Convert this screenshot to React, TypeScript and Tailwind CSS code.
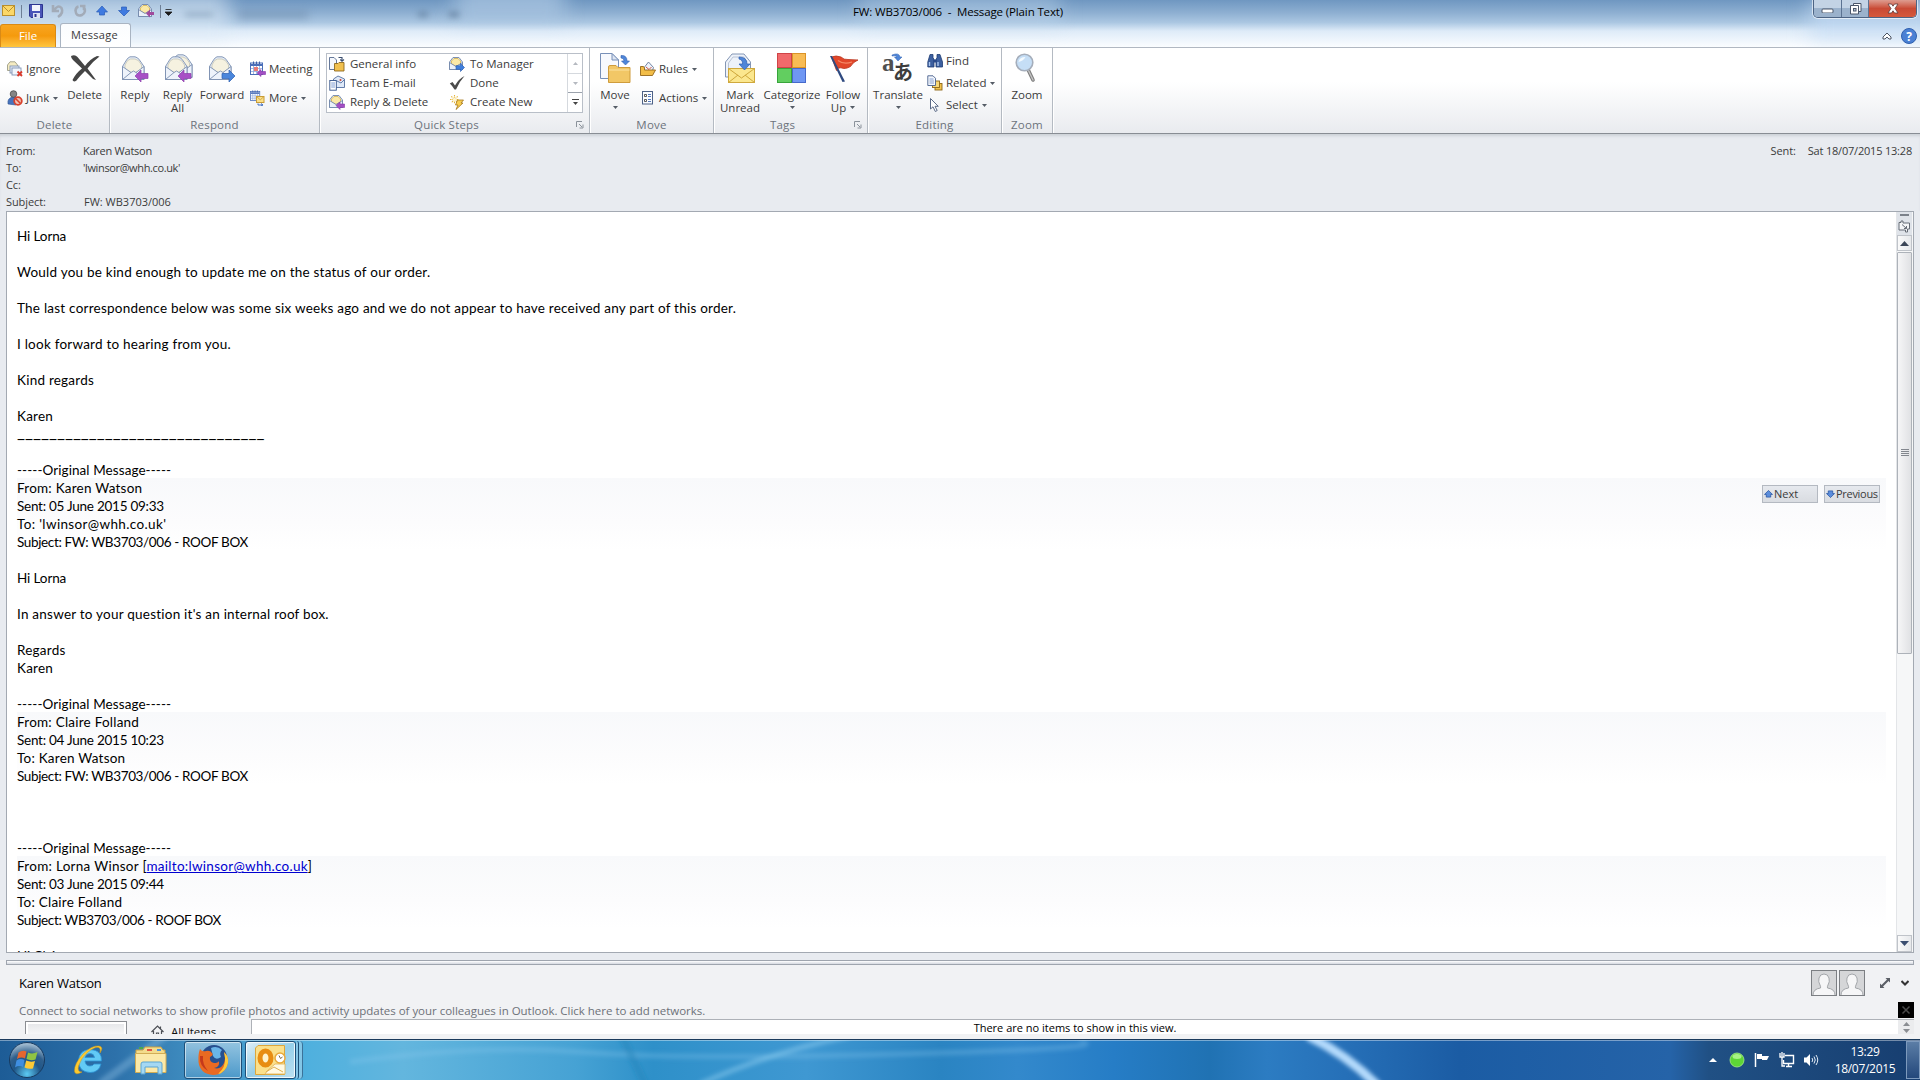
import type { ReactNode } from "react"
import clsx from "clsx"

/* ---------- shared icon parts ---------- */

const ARROW_LEFT = "M0 6 L6 0 V3.5 H13 V8.5 H6 V12 Z"
const ARROW_RIGHT = "M13 6 L7 0 V3.5 H0 V8.5 H7 V12 Z"

function OpenEnvelope() {
  return (
    <g stroke="#7a8fb0" strokeWidth=".9">
      <path d="M1.5 10.500 L5.500 4 Q7 1.500 9 .8 H14 Q17 1.500 18.500 4 L23 10.500 V23.500 H1.500 Z" fill="#e4ecf7" />
      <path d="M4 13 V9 Q6 3.500 9.500 3 H14 Q18 3.500 20.500 9 V13 L12.500 18 Z" fill="#f6f2e0" stroke="#c9c9bc" />
      <path d="M1.500 10.500 L10 16.500 L12.500 15 L15 16.500 L23 10.500 V23.500 H1.500 Z" fill="#eef3fb" />
      <path d="M1.500 23.500 L10 16.500 M23 23.500 L15 16.500" fill="none" />
    </g>
  )
}

function ReplyIcon() {
  return (
    <svg width="32" height="32" viewBox="0 0 32 32">
      <g transform="translate(2 3)"><OpenEnvelope /></g>
      <path d={ARROW_LEFT} transform="translate(16 17)" fill="#a850c6" stroke="#8c40ac" strokeWidth=".7" />
    </svg>
  )
}

function ReplyAllIcon() {
  return (
    <svg width="32" height="32" viewBox="0 0 32 32">
      <g transform="translate(7 1)"><OpenEnvelope /></g>
      <g transform="translate(2 3)"><OpenEnvelope /></g>
      <path d={ARROW_LEFT} transform="translate(16 17)" fill="#a850c6" stroke="#8c40ac" strokeWidth=".7" />
    </svg>
  )
}

function ForwardIcon() {
  return (
    <svg width="32" height="32" viewBox="0 0 32 32">
      <g transform="translate(2 3)"><OpenEnvelope /></g>
      <path d={ARROW_RIGHT} transform="translate(16 17)" fill="#4a86dc" stroke="#2c5fb0" strokeWidth=".7" />
    </svg>
  )
}

function DeleteIcon() {
  return (
    <svg width="32" height="32" viewBox="0 0 32 32">
      <path d="M2 3 Q6 1 8.500 4 L16 13 Q21 6 28 3 L30.500 3.500 Q23 9 18.500 15.500 L27 27 L24 26 L16 18 Q10 24 7.500 27.500 Q4.500 29.500 3.500 27 Q7 20 13 15.500 L4 7 Q2 5 2 3 Z" fill="#454545" />
    </svg>
  )
}

function MoveIcon() {
  return (
    <svg width="32" height="32" viewBox="0 0 32 32">
      <path d="M1.500 .5 H13 L19.500 7 V25.500 H1.500 Z" fill="#f7f9fd" stroke="#7890b8" />
      <path d="M13 .5 V7 H19.500 Z" fill="#dde5f2" stroke="#7890b8" />
      <path d="M9.500 14 Q9.500 12.500 11 12.500 H17 L19 14.500 H31 V29.500 H9.500 Z" fill="#f2c766" stroke="#cf9c3c" />
      <path d="M10 17 H30.500" stroke="#fbe3a1" />
      <path d="M22 2.500 Q28 2 28 8 H30.500 L26.500 12 L22.500 8 H25 Q25 5 22 5 Z" fill="#4f86d8" stroke="#2f60b0" strokeWidth=".6" />
    </svg>
  )
}

function MarkUnreadIcon() {
  return (
    <svg width="32" height="32" viewBox="0 0 32 32">
      <path d="M1.500 24 V9 L8 1 H20 L26.500 9 V24 Z" fill="#edf2fa" stroke="#8496b4" />
      <path d="M4.500 15 V10 L9 4 H20 L23 9" fill="none" stroke="#bac4d6" />
      <rect x="4.500" y="15.500" width="26" height="14" fill="#fbe78e" stroke="#cfa83c" />
      <path d="M4.500 15.500 L17.500 25 L30.500 15.500 M4.500 29.500 L14 22 M30.500 29.500 L21 22" fill="none" stroke="#cfa83c" />
      <path d="M15 4 Q23 4 23 11 H26 L20.500 17 L15 11 H18.500 Q19 7 15 6 Z" fill="#4f86d8" stroke="#2f60b0" strokeWidth=".7" />
    </svg>
  )
}

function CategorizeIcon() {
  return (
    <svg width="32" height="32" viewBox="0 0 32 32">
      <rect x="1.500" y=".5" width="14" height="14" fill="#f0696b" stroke="#cf4447" />
      <rect x="16.500" y=".5" width="13" height="14" fill="#f8bc55" stroke="#db9327" />
      <rect x="1.500" y="15.500" width="14" height="14" fill="#62ce60" stroke="#37a43b" />
      <rect x="16.500" y="15.500" width="13" height="14" fill="#6f97f3" stroke="#4669cb" />
    </svg>
  )
}

function FlagIcon() {
  return (
    <svg width="32" height="32" viewBox="0 0 32 32">
      <path d="M4.500 4 Q9 2 14 4 Q17 7 21 6.500 L31 7 Q26 9 23.500 13.500 Q18 16.500 15 15 Q11 14 9.500 17.500 Z" fill="#e2472a" stroke="#b8331d" strokeWidth=".8" />
      <path d="M3 3 L5 3 L18 28.500 L15.500 29 Z" fill="#2f4a80" />
      <path d="M11 7.500 Q17 12 25 9" fill="none" stroke="#f58a68" strokeWidth="1.200" />
    </svg>
  )
}

function TranslateIcon() {
  return (
    <svg width="32" height="32" viewBox="0 0 32 32">
      <text x="0" y="18" fontFamily="Liberation Serif, serif" fontWeight="700" fontSize="25" fill="#505050">a</text>
      <text x="11" y="27" fontFamily="Noto Sans CJK JP, sans-serif" fontWeight="700" fontSize="20" fill="#3d3d3d">あ</text>
      <path d="M10 2 Q17 -1 18 4 H20 L16 8 L12.500 4 H15 Q14 2 10 3 Z" fill="#4f86d8" stroke="#2f60b0" strokeWidth=".5" />
    </svg>
  )
}

function ZoomIcon() {
  return (
    <svg width="32" height="32" viewBox="0 0 32 32">
      <path d="M17.500 17.500 L22 27" stroke="#7e7e7e" strokeWidth="3.600" strokeLinecap="round" />
      <path d="M17.500 17.500 L22 27" stroke="#c4c4c4" strokeWidth="1.400" strokeLinecap="round" />
      <circle cx="13.500" cy="9.500" r="8.300" fill="#c5def6" stroke="#a5aebb" strokeWidth="1.600" />
      <path d="M7.500 9 Q8.500 4 14.500 4 Q12.500 8 7.500 9 Z" fill="#f3faff" />
    </svg>
  )
}

/* 16px variants */

function SmallEnvelope() {
  return (
    <g stroke="#7287aa" strokeWidth=".9">
      <path d="M.5 6 L4 1.500 H10 L13.500 6 V13.500 H.5 Z" fill="#e6edf8" />
      <path d="M2.500 8 V5 L5 2.500 H9 L11.500 5 V8 L7 10.500 Z" fill="#fbe9a7" stroke="#d9b957" />
      <path d="M.5 6.500 L7 10.500 L13.500 6.500 V13.500 H.5 Z" fill="#e9f0fa" />
    </g>
  )
}

function SmallReply() {
  return (
    <svg width="16" height="16" viewBox="0 0 16 16">
      <SmallEnvelope />
      <path d="M7 11.500 L11 8 V10 H15.500 V13.500 H11 V15.500 Z" fill="#a34fc4" stroke="#8436a8" strokeWidth=".6" />
    </svg>
  )
}

function SmallForward() {
  return (
    <svg width="16" height="16" viewBox="0 0 16 16">
      <SmallEnvelope />
      <path d="M15.500 11.500 L11.500 7.500 V9.700 H7 V13.300 H11.500 V15.500 Z" fill="#3f7fdc" stroke="#2458ac" strokeWidth=".6" />
    </svg>
  )
}

function IgnoreIcon() {
  return (
    <svg width="16" height="16" viewBox="0 0 16 16">
      <path d="M.5 9.500 V4 L3 .8 H8 L10.500 4 V9.500 Z" fill="#f6ecc2" stroke="#9d9d86" strokeWidth=".9" />
      <rect x="3" y="5" width="9" height="7" fill="#e3ebf7" stroke="#8295b5" strokeWidth=".9" />
      <rect x="5" y="7" width="9" height="7" fill="#f2f6fc" stroke="#8295b5" strokeWidth=".9" />
      <path d="M10.500 10.500 L15 15 M15 10.500 L10.500 15" stroke="#dc3b2c" strokeWidth="1.800" />
    </svg>
  )
}

function JunkIcon() {
  return (
    <svg width="16" height="16" viewBox="0 0 16 16">
      <path d="M1 14 Q0 8 6 7 Q10 7 11 10 L9 15 Z" fill="#4673bd" stroke="#2c4f8d" strokeWidth=".6" />
      <circle cx="6.500" cy="4" r="3.300" fill="#858585" stroke="#4c4c4c" strokeWidth=".8" />
      <circle cx="11" cy="11" r="3.800" fill="#f0c4b8" stroke="#d8412c" strokeWidth="1.800" />
      <path d="M8.500 8.500 L13.500 13.500" stroke="#d8412c" strokeWidth="1.600" />
    </svg>
  )
}

function CalendarGrid() {
  return (
    <g>
      <rect x=".5" y="2" width="12" height="11.500" fill="#fff" stroke="#4a6eb8" />
      <path d="M1 4 H12" stroke="#4a6eb8" strokeWidth="2" />
      <path d="M3.500 .5 V3 M6.500 .5 V3 M9.500 .5 V3" stroke="#3b5ea8" />
      <path d="M1 7.500 H12 M1 10.500 H12 M3.500 5 V13 M6.500 5 V13 M9.500 5 V13" stroke="#8ea8da" strokeWidth=".8" />
    </g>
  )
}

function MeetingIcon() {
  return (
    <svg width="16" height="16" viewBox="0 0 16 16">
      <CalendarGrid />
      <rect x="4" y="6" width="4" height="4" fill="#e87b78" />
      <path d="M7 12 L11 8.500 V10.500 H15.500 V13.500 H11 V15.500 Z" fill="#a34fc4" stroke="#8436a8" strokeWidth=".6" />
    </svg>
  )
}

function MoreIcon() {
  return (
    <svg width="16" height="16" viewBox="0 0 16 16">
      <g transform="scale(.78)"><CalendarGrid /></g>
      <rect x="6.500" y="6.500" width="7.500" height="6" fill="#fbe08a" stroke="#c99c36" />
      <path d="M6.500 6.500 L10.300 9.800 L14 6.500" fill="none" stroke="#c99c36" strokeWidth=".8" />
      <path d="M8 13.500 V15 H12 M11 13.500 L13 15 L11 16" stroke="#3d6cc0" fill="none" />
    </svg>
  )
}

function MoveSmallIcon() {
  return (
    <svg width="16" height="16" viewBox="0 0 16 16">
      <path d="M.5 1.500 H5 L7.500 4 V13.500 H.5 Z" fill="#f4f7fc" stroke="#53698f" strokeWidth=".9" />
      <path d="M5.500 7.500 H9 L10 6.500 H15 V15 H5.500 Z" fill="#f0c04f" stroke="#8f6a1e" strokeWidth=".9" />
      <path d="M9.500 1.500 H13 V5 M11.300 3.500 L13 5.300 L15 3.500" stroke="#384c6e" fill="none" strokeWidth="1.100" />
    </svg>
  )
}

function TeamMailIcon() {
  return (
    <svg width="16" height="16" viewBox="0 0 16 16">
      <path d="M4.500 4 L9 1 L15.500 4 V12.500 H5 Z" fill="#dfe9f8" stroke="#55719f" strokeWidth=".9" />
      <path d="M8 6 L12 8 L15 5" stroke="#55719f" fill="none" strokeWidth=".9" />
      <circle cx="11.500" cy="5" r="1" fill="#cc4435" />
      <rect x=".8" y="5.500" width="6.500" height="9.700" fill="#fff" stroke="#35548a" strokeWidth=".9" />
      <path d="M2.200 8 H6 M2.200 10 H6 M2.200 12 H6" stroke="#5e84c6" strokeWidth=".8" />
    </svg>
  )
}

function DoneIcon() {
  return (
    <svg width="16" height="16" viewBox="0 0 16 16">
      <path d="M.8 8.500 L3.500 7 L6 10.500 Q9.500 4 15.500 1 Q10 7 7 14.500 H5.500 Q3.500 11 .8 8.500 Z" fill="#4b4b4b" />
    </svg>
  )
}

function CreateNewIcon() {
  return (
    <svg width="16" height="16" viewBox="0 0 16 16">
      <path d="M5.500 1 V10 M1 5.500 H10 M2.300 2.300 L8.700 8.700 M8.700 2.300 L2.300 8.700" stroke="#e5b63a" strokeWidth="1.100" strokeDasharray="1.500 .7" />
      <circle cx="5.500" cy="5.500" r="1.700" fill="#fff6cf" />
      <path d="M8.500 6 H14.500 L12 9 H14 L7 15.500 L9 11 H6.500 Z" fill="#f9cf52" stroke="#a5771d" strokeWidth=".8" />
    </svg>
  )
}

function RulesIcon() {
  return (
    <svg width="16" height="16" viewBox="0 0 16 16">
      <path d="M3 8 L8.500 1 L13.500 6.500 L12 11 H4 Z" fill="#eef3fb" stroke="#627698" strokeWidth=".9" />
      <path d="M6 6 L9 8.500 L11.500 6" stroke="#cf5448" fill="none" />
      <path d="M.5 14.500 V5.500 H3.500 L4.500 7 V9 H15.500 L12.500 14.500 Z" fill="#f2bd47" stroke="#94671a" strokeWidth=".9" />
    </svg>
  )
}

function ActionsIcon() {
  return (
    <svg width="16" height="16" viewBox="0 0 16 16">
      <rect x="2.500" y="1.500" width="10" height="12.500" fill="#fafcff" stroke="#4d6186" />
      <path d="M4.500 4.500 H6.500 V6.500 H4.500 Z M4.500 9.500 H6.500 V11.500 H4.500 Z" fill="#fff" stroke="#333" strokeWidth=".8" />
      <path d="M8 4.500 H11 M8 6.500 H11 M8 9.500 H11 M8 11.500 H11" stroke="#3f69b5" strokeWidth=".9" />
    </svg>
  )
}

function FindIcon() {
  return (
    <svg width="16" height="16" viewBox="0 0 16 16">
      <path d="M3 1.500 H6 V5 L7 6 V14 H.8 V9 Z M10 1.500 H13 L15.500 9 V14 H9 V6 L10 5 Z" fill="#3c5f9f" stroke="#1e3c74" strokeWidth=".8" />
      <path d="M6.500 6.500 H9.500 V9.500 H6.500 Z" fill="#28498a" />
      <path d="M2.500 9 V13 M11 9 V13" stroke="#aac6f0" strokeWidth="1.400" />
    </svg>
  )
}

function RelatedIcon() {
  return (
    <svg width="16" height="16" viewBox="0 0 16 16">
      <rect x="8" y="8.500" width="7" height="6.500" fill="#f3c34c" stroke="#8d6717" strokeWidth=".9" />
      <rect x="5.500" y="6" width="7" height="6.500" fill="#f8d878" stroke="#8d6717" strokeWidth=".9" />
      <path d="M.8 .8 H6 L8.500 3.300 V10.500 H.8 Z" fill="#f3f7fd" stroke="#48608c" strokeWidth=".9" />
      <path d="M2.500 4 H6.500 M2.500 6 H7 M2.500 8 H7" stroke="#6d8cc4" strokeWidth=".8" />
    </svg>
  )
}

function SelectIcon() {
  return (
    <svg width="16" height="16" viewBox="0 0 16 16">
      <path d="M3.500 1.500 V12 L6 9.800 L8.300 14.500 L10.200 13.500 L8 9.300 H11.300 Z" fill="#fff" stroke="#5c6b88" />
    </svg>
  )
}

/* ---------- ribbon building blocks ---------- */

function DropArrow({ className }: { className?: string }) {
  return (
    <svg width="5" height="3" viewBox="0 0 5 3" className={clsx("inline-block shrink-0", className)}>
      <path d="M0 0 H5 L2.500 3 Z" fill="#555c66" />
    </svg>
  )
}

function BigButton({ icon, lines, width, arrow }: { icon: ReactNode; lines: string[]; width: string; arrow?: "inline" | "below" }) {
  return (
    <button className={clsx("flex shrink-0 flex-col items-center pt-[5px] leading-[13px]", width)}>
      {icon}
      <span className="mt-[3px] h-[13px] whitespace-nowrap">{lines[0]}</span>
      <span className="flex h-[13px] items-center gap-1">
        {lines[1]}
        {arrow && <DropArrow className={arrow === "below" ? "-mt-px" : ""} />}
      </span>
    </button>
  )
}

function SmallButton({ icon, label, arrow }: { icon: ReactNode; label: string; arrow?: boolean }) {
  return (
    <button className="flex h-[22px] items-center whitespace-nowrap">
      {icon}
      <span className="ml-[3px]">{label}</span>
      {arrow && <DropArrow className="ml-[4px]" />}
    </button>
  )
}

function Group({ title, width, launcher, children }: { title: string; width: string; launcher?: boolean; children: ReactNode }) {
  return (
    <section className={clsx("relative flex h-[85px] shrink-0 flex-col border-r border-[#b4bac2] shadow-[1px_0_0_#fff]", width)}>
      <div className="flex h-[69px] w-full">{children}</div>
      <h2 className={clsx("text-center leading-4 tracking-[0.2px] text-[#6c737c]", launcher && "pr-[16px]")}>{title}</h2>
      {launcher && (
        <svg width="8" height="8" viewBox="0 0 8 8" className="absolute right-[5px] bottom-[4px]">
          <path d="M.5 6 V.5 H6 M3 3 L6 6 M7 3.500 V7 H3.500" fill="none" stroke="#8b929b" />
        </svg>
      )}
    </section>
  )
}

/* ---------- title bar ---------- */

function QuickAccess() {
  return (
    <div className="flex h-[23px] items-center">
      <svg width="190" height="23" viewBox="0 0 190 23">
        <rect x="2.500" y="5.500" width="12" height="10" fill="#fbd768" stroke="#b98f2e" />
        <path d="M2.500 5.500 L8.500 11.500 L14.500 5.500" fill="none" stroke="#b98f2e" />
        <path d="M21.500 5 V18 M160.500 5 V18" stroke="#6e7f96" />
        <path d="M29.500 4.500 H42.500 V17.500 H31 L29.500 16 Z" fill="#4a55b8" stroke="#2b3590" />
        <rect x="32" y="5" width="8" height="6" fill="#f1f4fc" />
        <rect x="33" y="13" width="7" height="5" fill="#dfe3f2" />
        <rect x="34.500" y="14" width="2" height="3" fill="#2b3590" />
        <path d="M53 5 V11 H59 M54 10.500 Q58 4 61.500 8 Q64 13 58 17" fill="none" stroke="#a2abb8" strokeWidth="2.600" />
        <path d="M85.500 6 H80 M84 5 V10 M83.500 6.500 Q87 12 82 15 Q76 17 75.500 10.500 Q76 7 78.500 6.500" fill="none" stroke="#a2abb8" strokeWidth="2.600" />
        <path d="M102 6 L107.500 12 H104.500 V15 H99.500 V12 H96.500 Z" fill="#3f7ae0" stroke="#2a5cb8" strokeWidth=".7" />
        <path d="M124 16 L118.500 10.500 H121.500 V7 H126.500 V10.500 H129.500 Z" fill="#3f7ae0" stroke="#2a5cb8" strokeWidth=".7" />
        <g transform="translate(138 3)">
          <SmallEnvelope />
          <path d="M8 10.500 L12 6.500 V9 H16 V12 H12 V14.500 Z" fill="#a04a9c" />
        </g>
        <path d="M165.500 9.500 H171.500 M165 12 H172 L168.500 15.500 Z" fill="#1b1b1b" stroke="#1b1b1b" strokeWidth=".8" />
      </svg>
    </div>
  )
}

function WindowButtons() {
  return (
    <div className="absolute top-0 right-[3px] flex h-[18px] overflow-hidden rounded-b-[5px] border border-t-0 border-[#4d6484] shadow-[0_0_0_1px_rgba(255,255,255,0.6)]">
      <div className="flex w-[28px] items-center justify-center border-r border-[#5c7392] bg-linear-to-b from-[#c3d3e5] from-50% to-[#9bb2cc] to-50%">
        <svg width="13" height="8"><rect x="1" y="4" width="11" height="4" rx="1" fill="#fff" stroke="#4b566a" /></svg>
      </div>
      <div className="flex w-[27px] items-center justify-center border-r border-[#5c7392] bg-linear-to-b from-[#c3d3e5] from-50% to-[#9bb2cc] to-50%">
        <svg width="13" height="13">
          <path d="M4.500 1.500 H12 V9.500 H4.500 Z" fill="#fff" stroke="#4b566a" />
          <path d="M1.500 3.500 H9.500 V12 H1.500 Z" fill="#fff" stroke="#4b566a" />
          <rect x="4.500" y="6.500" width="2.500" height="2.500" fill="#b8c8da" stroke="#4b566a" />
        </svg>
      </div>
      <div className="flex w-[47px] items-center justify-center bg-linear-to-b from-[#dd9c90] via-[#c94a35] via-50% to-[#d5593c]">
        <svg width="12" height="11" viewBox="0 0 12 11">
          <path d="M1 1 H4.500 L6 3.200 L7.500 1 H11 L8 5.500 L11 10 H7.500 L6 7.800 L4.500 10 H1 L4 5.500 Z" fill="#fff" stroke="#5d3a3a" strokeWidth=".8" />
        </svg>
      </div>
    </div>
  )
}

function TitleBar() {
  return (
    <header className="relative flex h-[47px] flex-col overflow-hidden bg-[linear-gradient(#6f97c1,#8fb0d2_28%,#abc7e2_48%,#deebf8_66%,#fbfdff)]">
      {/* desktop showing through the glass frame */}
      <div className="absolute -top-2 -left-8 h-[46px] w-[260px] bg-[#dce9f6]/60 blur-[10px]" />
      <div className="absolute -top-4 left-[455px] h-9 w-[110px] bg-[#b6cfe8]/60 blur-[10px]" />
      <div className="absolute top-3 left-[238px] h-[6px] w-[70px] bg-[#5f7c9c]/50 blur-[4px]" />
      <div className="absolute top-3 left-[185px] h-[5px] w-[28px] bg-[#5f7c9c]/40 blur-[3px]" />
      <div className="absolute top-3 left-[418px] h-[5px] w-[10px] bg-[#44617f]/50 blur-[3px]" />
      <div className="absolute top-3 left-[449px] h-[5px] w-[10px] bg-[#44617f]/60 blur-[3px]" />
      <div className="absolute -top-2 left-[860px] h-8 w-[200px] bg-[#c4d9ee]/40 blur-[10px]" />
      <div className="absolute top-0 -right-5 h-[40px] w-[130px] bg-[#c4dbf3]/70 blur-[10px]" />
      <div className="absolute inset-x-0 top-0 flex h-[23px] items-center justify-center pr-[4px] text-[11.5px] tracking-[-0.13px] whitespace-pre text-black">
        FW: WB3703/006  -  Message (Plain Text)
      </div>
      <WindowButtons />
      <div className="relative flex h-6 w-fit">
        <QuickAccess />
      </div>
      <div className="relative flex h-[23px] items-end text-[12px]">
        <button className="h-[23px] w-[56px] rounded-t-[3px] border border-b-0 border-[#d98a16] bg-linear-to-b from-[#f8a51f] via-[#f59a0c] via-50% to-[#ffc63d] text-[11.5px] text-white">File</button>
        <button className="ml-[4px] h-[24px] w-[71px] rounded-t-[3px] border border-b-0 border-[#a9b4c2] bg-linear-to-b from-[#fafcfe] to-white pr-[2px] text-[11px] tracking-[0.3px] text-[#3b3b3b]">Message</button>
        <div className="ml-auto flex h-full items-center pr-[3px]">
          <svg width="10" height="8" viewBox="0 0 10 8" className="mr-[9px]">
            <path d="M1 5 L5 1 L9 5 V7 H7 L5 5 L3 7 H1 Z" fill="#fff" stroke="#4c5564" />
          </svg>
          <svg width="16" height="16" viewBox="0 0 16 16">
            <circle cx="8" cy="8" r="7.500" fill="#4a80d4" stroke="#2f5fae" />
            <text x="8" y="12.500" textAnchor="middle" fontFamily="Open Sans, sans-serif" fontWeight="700" fontSize="12" fill="#fff">?</text>
          </svg>
        </div>
      </div>
    </header>
  )
}

/* ---------- ribbon ---------- */

const quickSteps = [
  { label: "General info", icon: <MoveSmallIcon /> },
  { label: "To Manager", icon: <SmallForward /> },
  { label: "Team E-mail", icon: <TeamMailIcon /> },
  { label: "Done", icon: <DoneIcon /> },
  { label: "Reply & Delete", icon: <SmallReply /> },
  { label: "Create New", icon: <CreateNewIcon /> },
]

function Ribbon() {
  return (
    <div className="flex h-[87px] border-t border-b border-t-[#b1b8c2] border-b-[#888d94] bg-linear-to-b from-white from-40% to-[#e9ebef] text-[11.5px] text-[#3b3b3b]">
      <Group title="Delete" width="w-[110px]">
        <div className="flex flex-col gap-[7px] pt-[10px] pl-[7px]">
          <SmallButton icon={<IgnoreIcon />} label="Ignore" />
          <SmallButton icon={<JunkIcon />} label="Junk" arrow />
        </div>
        <div className="mr-px ml-auto">
          <BigButton icon={<DeleteIcon />} lines={["Delete"]} width="w-[48px]" />
        </div>
      </Group>
      <Group title="Respond" width="w-[210px]">
        <BigButton icon={<ReplyIcon />} lines={["Reply"]} width="w-[44px] ml-[3px]" />
        <BigButton icon={<ReplyAllIcon />} lines={["Reply", "All"]} width="w-[41px]" />
        <BigButton icon={<ForwardIcon />} lines={["Forward"]} width="w-[48px]" />
        <div className="flex flex-col gap-[7px] pt-[10px] pl-[4px]">
          <SmallButton icon={<MeetingIcon />} label="Meeting" />
          <SmallButton icon={<MoreIcon />} label="More" arrow />
        </div>
      </Group>
      <Group title="Quick Steps" width="w-[270px]" launcher>
        <div className="mt-[5px] ml-[6px] flex h-[60px] w-[257px] border border-[#b9bfc8] bg-white">
          <div className="grid w-[241px] grid-cols-[120px_1fr] grid-rows-3 pb-px pl-[2px]">
            {quickSteps.map((step) => (
              <div key={step.label} className="flex items-center whitespace-nowrap">
                {step.icon}
                <span className="ml-[5px]">{step.label}</span>
              </div>
            ))}
          </div>
          <div className="flex w-[15px] flex-col border-l border-[#d5d9de]">
            <div className="flex flex-1 items-center justify-center border-b border-[#d5d9de]">
              <svg width="5" height="3"><path d="M0 3 H5 L2.500 0 Z" fill="#b5b9c0" /></svg>
            </div>
            <div className="flex flex-1 items-center justify-center">
              <svg width="5" height="3"><path d="M0 0 H5 L2.500 3 Z" fill="#b5b9c0" /></svg>
            </div>
            <div className="flex flex-1 items-center justify-center border-t border-[#9ba2ac]">
              <svg width="7" height="7"><path d="M0 .5 H7" stroke="#444" /><path d="M1 3 H6 L3.500 6 Z" fill="#444" /></svg>
            </div>
          </div>
        </div>
      </Group>
      <Group title="Move" width="w-[124px]">
        <BigButton icon={<MoveIcon />} lines={["Move"]} width="w-[44px] ml-[3px]" arrow="below" />
        <div className="flex flex-col gap-[7px] pt-[10px] pl-[3px]">
          <SmallButton icon={<RulesIcon />} label="Rules" arrow />
          <SmallButton icon={<ActionsIcon />} label="Actions" arrow />
        </div>
      </Group>
      <Group title="Tags" width="w-[154px]" launcher>
        <BigButton icon={<MarkUnreadIcon />} lines={["Mark", "Unread"]} width="w-[46px] ml-[3px]" />
        <BigButton icon={<CategorizeIcon />} lines={["Categorize"]} width="w-[58px]" arrow="below" />
        <BigButton icon={<FlagIcon />} lines={["Follow", "Up"]} width="w-[44px]" arrow="inline" />
      </Group>
      <Group title="Editing" width="w-[134px]">
        <BigButton icon={<TranslateIcon />} lines={["Translate"]} width="w-[52px] ml-[4px]" arrow="below" />
        <div className="flex flex-col pt-[2px] pl-[3px]">
          <SmallButton icon={<FindIcon />} label="Find" />
          <SmallButton icon={<RelatedIcon />} label="Related" arrow />
          <SmallButton icon={<SelectIcon />} label="Select" arrow />
        </div>
      </Group>
      <Group title="Zoom" width="w-[51px]">
        <BigButton icon={<ZoomIcon />} lines={["Zoom"]} width="w-[50px]" />
      </Group>
    </div>
  )
}

/* ---------- message ---------- */

const headerRows = [
  { label: "From:", value: "Karen Watson", track: "tracking-[-0.25px]" },
  { label: "To:", value: "'lwinsor@whh.co.uk'", track: "tracking-[-0.37px]" },
  { label: "Cc:", value: "", track: "" },
  { label: "Subject:", value: "FW: WB3703/006", track: "pl-px" },
]

function MessageHeader() {
  return (
    <div className="flex h-[77px] justify-between bg-[#e8ebf0] pt-[8px] pr-[8px] pl-[6px] text-[11px] leading-[17px] text-[#3b3b3b] shadow-[inset_0_3px_3px_-1px_#cdd1d7]">
      <dl>
        {headerRows.map((row) => (
          <div key={row.label} className="flex h-[17px]">
            <dt className="w-[77px] tracking-[-0.1px]">{row.label}</dt>
            <dd className={row.track}>{row.value}</dd>
          </div>
        ))}
      </dl>
      <div className="flex gap-3">
        <span className="tracking-[-0.1px]">Sent:</span>
        <span className="tracking-[-0.2px]">Sat 18/07/2015 13:28</span>
      </div>
    </div>
  )
}

function tracking(line: string) {
  if (line.startsWith("Subject:")) return "tracking-[-0.36px]"
  if (line.startsWith("Sent:")) return "tracking-[-0.25px]"
  if (line.startsWith("-----")) return "tracking-[0.08px]"
  if (line.startsWith("Hi ")) return "tracking-[-0.12px]"
  if (line.startsWith("To: '")) return "tracking-[0.36px]"
  return "tracking-[0.23px]"
}

function Lines({ items }: { items: string[] }) {
  return (
    <>
      {items.map((line, i) => (
        <p key={i} className={clsx("h-[18px] whitespace-pre", tracking(line))}>{line}</p>
      ))}
    </>
  )
}

function QuotedHeader({ children, nav }: { children: ReactNode; nav?: boolean }) {
  return (
    <div className="-mt-px flex h-[73px] w-[1869px] justify-between bg-linear-to-b from-[#f8f9fb] via-[#fcfcfd] via-60% to-white pt-px">
      <div>{children}</div>
      {nav && (
        <div className="mt-[6px] mr-[6px] flex gap-[6px] font-['Open_Sans',sans-serif] text-[11px] leading-4 text-[#3b3b3b]">
          <button className="flex h-[18px] w-[56px] items-center gap-px border border-[#b4b9c1] bg-linear-to-b from-[#e6e9ee] to-[#d9dce1] pl-px">
            <svg width="9" height="8" viewBox="0 0 10 9"><path d="M5 .5 L9.500 5 H7.500 V8 H2.500 V5 H.5 Z" fill="#5b8ddc" stroke="#1f4d9e" strokeWidth=".8" /></svg>
            Next
          </button>
          <button className="flex h-[18px] w-[56px] items-center gap-px border border-[#b4b9c1] bg-linear-to-b from-[#e6e9ee] to-[#d9dce1] pl-px tracking-[-0.3px]">
            <svg width="9" height="8" viewBox="0 0 10 9" className="shrink-0"><path d="M5 8.500 L9.500 4 H7.500 V1 H2.500 V4 H.5 Z" fill="#5b8ddc" stroke="#1f4d9e" strokeWidth=".8" /></svg>
            Previous
          </button>
        </div>
      )}
    </div>
  )
}

function MessageBody() {
  return (
    <div className="min-w-0 flex-1 overflow-hidden pt-[15px] pl-[10px] font-['Lato',sans-serif] text-[13.5px] leading-[18px] text-black">
      <Lines
        items={[
          "Hi Lorna", "",
          "Would you be kind enough to update me on the status of our order.", "",
          "The last correspondence below was some six weeks ago and we do not appear to have received any part of this order.", "",
          "I look forward to hearing from you.", "",
          "Kind regards", "",
          "Karen",
        ]}
      />
      <p className="h-[18px] text-[17.4px] leading-[14px]">_______________________________</p>
      <Lines items={["", "-----Original Message-----"]} />
      <QuotedHeader nav>
        <Lines items={["From: Karen Watson", "Sent: 05 June 2015 09:33", "To: 'lwinsor@whh.co.uk'", "Subject: FW: WB3703/006 - ROOF BOX"]} />
      </QuotedHeader>
      <Lines
        items={["", "Hi Lorna", "", "In answer to your question it's an internal roof box.", "", "Regards", "Karen", "", "-----Original Message-----"]}
      />
      <QuotedHeader>
        <Lines items={["From: Claire Folland", "Sent: 04 June 2015 10:23", "To: Karen Watson", "Subject: FW: WB3703/006 - ROOF BOX"]} />
      </QuotedHeader>
      <Lines items={["", "", "", "-----Original Message-----"]} />
      <QuotedHeader>
        <p className="h-[18px] tracking-[0.28px]">
          From: Lorna Winsor [<a className="text-[#0000d0] underline" href="mailto:lwinsor@whh.co.uk">mailto:lwinsor@whh.co.uk</a>]
        </p>
        <Lines items={["Sent: 03 June 2015 09:44", "To: Claire Folland", "Subject: WB3703/006 - ROOF BOX"]} />
      </QuotedHeader>
      <Lines items={["", "Hi Claire"]} />
    </div>
  )
}

function ScrollBar() {
  return (
    <div className="flex w-[17px] shrink-0 flex-col items-center border-l border-[#e3e5e8] bg-[#f6f7f8] pr-px">
      <div className="flex h-[23px] w-full flex-col items-center bg-[#dfe3e9] pt-[2px]">
        <div className="h-[2px] w-[9px] bg-[#7b818a]" />
        <svg width="13" height="13" viewBox="0 0 13 13" className="mt-[4px]">
          <path d="M1 2.500 H3 V1 H5 V3 H11.500 V9 H9.500 V12 H7.500 V10 H1 Z" fill="#f3f4f6" stroke="#666c76" />
          <path d="M4 4.500 L8.500 8.500 M6 8.500 H8.500 V6" stroke="#666c76" fill="none" />
        </svg>
      </div>
      <div className="flex h-[16px] w-[15px] items-center justify-center border border-[#bfc3c9] bg-linear-to-r from-[#fafafa] to-[#e6e8eb]">
        <svg width="9" height="5"><path d="M0 5 L4.500 0 L9 5 Z" fill="#3b4657" /></svg>
      </div>
      <div className="mt-px flex h-[402px] w-[15px] items-center justify-center rounded-[1px] border border-[#adb2b9] bg-linear-to-r from-[#f6f6f7] to-[#e0e1e4] pb-[2px]">
        <div className="flex flex-col gap-px">
          <div className="h-px w-2 bg-[#83878e]" />
          <div className="h-px w-2 bg-[#83878e]" />
          <div className="h-px w-2 bg-[#83878e]" />
          <div className="h-px w-2 bg-[#83878e]" />
        </div>
      </div>
      <div className="mt-auto flex h-[17px] w-[15px] items-center justify-center border border-[#bfc3c9] bg-linear-to-r from-[#fafafa] to-[#e6e8eb]">
        <svg width="9" height="5"><path d="M0 0 L4.500 5 L9 0 Z" fill="#3b4e70" /></svg>
      </div>
    </div>
  )
}

/* ---------- people pane ---------- */

function Avatar() {
  return (
    <svg width="26" height="26" viewBox="0 0 26 26">
      <rect x=".5" y=".5" width="25" height="25" fill="#d5d6d8" stroke="#7c7f83" />
      <path d="M2 25 Q2 19 9.500 18 Q10 17 9 15 Q7 12 8 8 Q9 4 13 4 Q17 4 18 8 Q19 12 17 15 Q16 17 16.500 18 Q24 19 24 25" fill="#f6f6f7" stroke="#a3a6aa" />
    </svg>
  )
}

function PeoplePane() {
  return (
    <div className="flex h-[75px] flex-col overflow-hidden bg-[#f1f2f4]">
      <div className="flex h-[35px] items-center pr-[11px] pl-[19px]">
        <span className="pt-[2px] text-[13px] tracking-[-0.2px] text-black">Karen Watson</span>
        <div className="ml-auto flex items-center">
          <Avatar />
          <div className="w-[2px]" />
          <Avatar />
          <svg width="12" height="12" viewBox="0 0 12 12" className="ml-[14px]">
            <path d="M6.500 1 H11 V5.500 L9.500 4 L4 9.500 L5.500 11 H1 V6.500 L2.500 8 L8 2.500 Z" fill="#5b5f66" />
          </svg>
          <svg width="8" height="6" viewBox="0 0 8 6" className="ml-[10px]">
            <path d="M.5 1 L4 4.500 L7.500 1" fill="none" stroke="#333" strokeWidth="2" />
          </svg>
        </div>
      </div>
      <div className="flex h-[19px] items-start pr-[6px] pl-[19px]">
        <span className="mt-[2px] text-[11.5px] tracking-[-0.02px] text-[#6d7178]">
          Connect to social networks to show profile photos and activity updates of your colleagues in Outlook. Click here to add networks.
        </span>
        <svg width="16" height="16" viewBox="0 0 16 16" className="mt-[2px] ml-auto">
          <rect width="16" height="16" fill="#000" />
          <path d="M4.500 4.500 L11.500 11.500 M11.500 4.500 L4.500 11.500" stroke="#4a4a4a" strokeWidth="1.500" />
        </svg>
      </div>
      {/* cut short by the bottom edge of the window */}
      <div className="flex h-[15px] overflow-hidden pr-[6px] pl-[25px]">
        <div className="mt-[2px] h-5 w-[102px] border border-[#8a8d92] bg-linear-to-b from-[#e4e5e8] to-white shadow-[inset_0_0_0_2px_#fff]" />
        <div className="mt-[6px] ml-[24px] flex h-4 w-[100px] items-start text-[11.5px] leading-[14px] tracking-[-0.1px] text-[#111]">
          <svg width="13" height="12" viewBox="0 0 13 12" className="mr-[7px]">
            <path d="M.5 7 L6.500 1 L12.500 7 M2.500 6 V12 M10.500 6 V12 M5.500 12 V8 H7.500 V12 M9.500 1.500 V4" fill="none" stroke="#4c4f55" strokeWidth="1.200" />
          </svg>
          All Items
        </div>
        <div className="flex h-5 flex-1 justify-center border-t border-l border-[#adb1b7] bg-white text-[11px] leading-[15px] text-black">
          There are no items to show in this view.
        </div>
        <div className="flex w-[16px] flex-col items-center gap-[3px] border-t border-[#adb1b7] bg-[#ebecee] pt-[2px]">
          <svg width="7" height="4"><path d="M0 4 L3.500 0 L7 4 Z" fill="#8a8d92" /></svg>
          <svg width="7" height="4"><path d="M0 0 L3.500 4 L7 0 Z" fill="#8a8d92" /></svg>
        </div>
      </div>
    </div>
  )
}

/* ---------- taskbar ---------- */

function StartOrb() {
  return (
    <svg width="38" height="38" viewBox="0 0 38 38">
      <defs>
        <radialGradient id="orb" cx=".5" cy=".9" r=".85">
          <stop offset="0" stopColor="#5ccbf4" />
          <stop offset=".45" stopColor="#1f5688" />
          <stop offset=".7" stopColor="#2f5f8c" />
          <stop offset="1" stopColor="#9db8ce" />
        </radialGradient>
      </defs>
      <circle cx="19" cy="19" r="17.500" fill="url(#orb)" stroke="#173a60" />
      <path d="M10.500 11.500 Q14.500 8.500 18.500 10.500 L17 17.500 Q13 15.500 9 18 Z" fill="#e5662f" />
      <path d="M20 11.500 Q24.500 13.500 29.500 11 L27.500 18.500 Q22.500 20 18.500 18 Z" fill="#8fc343" />
      <path d="M8.500 19.500 Q12.500 17 16.500 19 L15 26 Q11 24 7 26.500 Z" fill="#3f8ee0" />
      <path d="M18.200 19.500 Q22.500 21.500 27 20 L25 27.500 Q20.500 28.500 16.500 26.500 Z" fill="#fbc936" />
    </svg>
  )
}

function ExplorerE() {
  return (
    <svg width="32" height="32" viewBox="0 0 32 32">
      <path d="M28.500 17 H12 Q12.500 22 17 22 Q20 22 21 20 H28 Q26 28.500 17 28.500 Q6 28 5.500 17 Q6 6 17 5.500 Q29 6 28.500 17 Z M12 13.500 H21.500 Q21 9.500 17 9.500 Q13 9.500 12 13.500 Z" fill="#62caf5" fillRule="evenodd" stroke="#2c93d4" strokeWidth=".8" />
      <path d="M27 9 Q31 3 26 2 Q19 1 10 10 Q1 20 1.500 27 Q2 32 9 28 Q4 28 5.500 22 Q8 14 15 8 Q22 2.500 25.500 3.500 Q28 4 27 9 Z" fill="#fcca2e" stroke="#d99a16" strokeWidth=".5" />
    </svg>
  )
}

function FolderIcon() {
  return (
    <svg width="34" height="32" viewBox="0 0 34 32">
      <path d="M2 6 H9 L11 3 H27 L29 6 H31 V28 H2 Z" fill="#f3dc8c" stroke="#c79f45" />
      <path d="M5 3 H9 V5 H5 Z" fill="#49a94c" />
      <path d="M13 5 H18 V7 H13 Z" fill="#e25444" />
      <path d="M23 5 H27 V7 H23 Z" fill="#4a94df" />
      <path d="M1.500 9.500 H32 V28.500 H1.500 Z" fill="#fbe9a8" stroke="#d2ad54" />
      <path d="M7 30 V20 Q7 18 9 18 H26 Q28 18 28 20 V30 H24 V23 H11 V30 Z" fill="#a4d8f3" stroke="#5ba5d3" />
    </svg>
  )
}

function FirefoxIcon() {
  return (
    <svg width="32" height="32" viewBox="0 0 32 32">
      <circle cx="17" cy="14" r="13" fill="#27508f" />
      <path d="M14 4 Q20 1 25 6 Q22 9 24 13 Q19 17 16 12 Z" fill="#69b5e8" />
      <path d="M3 5 Q5 8 9 7 Q13 6 15 9 Q17 11 13 13 Q12 18 17 19 Q21 19 22 17 Q23 23 17 24 Q24 26 27 19 Q29 14 27 8 Q32 13 31 19 Q28 31 16 31 Q3 30 1.500 18 Q1 10 3 5 Z" fill="#e96a22" />
      <path d="M27 8 Q32 13 31 19 Q29 28 21 30 Q29 23 28 14 Z" fill="#fcc93b" />
      <path d="M3 12 Q2 22 11 27 Q5 20 6 12 Z" fill="#c5391c" />
    </svg>
  )
}

function OutlookIcon() {
  return (
    <svg width="32" height="32" viewBox="0 0 32 32">
      <path d="M4 1.500 H30.500 V30.500 H1.500 V4 Z" fill="#fae08c" stroke="#dda63a" />
      <path d="M13 27 L21 20 H31 V30 H11 Z" fill="#fff9e2" stroke="#e0b151" strokeWidth=".8" />
      <ellipse cx="11.500" cy="14" rx="5.500" ry="7" fill="#fff3cc" stroke="#e88d12" strokeWidth="5" />
      <circle cx="26" cy="14" r="5" fill="#fff" stroke="#e8a93a" strokeWidth="1.500" />
      <path d="M25 11.500 L26.500 14.500 L28.500 13" fill="none" stroke="#7c6a43" />
      <path d="M12 28 L20 23 L29 28" fill="none" stroke="#e0b151" />
    </svg>
  )
}

function Wallpaper() {
  return (
    <svg width="1920" height="40" viewBox="0 0 1920 40" className="absolute inset-0" preserveAspectRatio="none">
      <defs>
        <linearGradient id="glass" x1="0" x2="1" y1="0" y2="0">
          <stop offset="0" stopColor="#1d5c96" />
          <stop offset=".06" stopColor="#2d71aa" />
          <stop offset=".1" stopColor="#3f8dc0" />
          <stop offset=".16" stopColor="#4fb0de" />
          <stop offset=".21" stopColor="#63b6de" />
          <stop offset=".3" stopColor="#46a2d4" />
          <stop offset=".34" stopColor="#2e90c9" />
          <stop offset=".42" stopColor="#3f98d2" />
          <stop offset=".49" stopColor="#2a84c2" />
          <stop offset=".53" stopColor="#3389cc" />
          <stop offset=".58" stopColor="#267dc6" />
          <stop offset=".63" stopColor="#2072b3" />
          <stop offset=".66" stopColor="#2c7cc2" />
          <stop offset=".7" stopColor="#2670b8" />
          <stop offset=".76" stopColor="#1b5ca4" />
          <stop offset=".87" stopColor="#2563a8" />
          <stop offset=".89" stopColor="#205084" />
          <stop offset="1" stopColor="#173e70" />
        </linearGradient>
        <filter id="soft"><feGaussianBlur stdDeviation="2" /></filter>
      </defs>
      <rect width="1920" height="40" fill="url(#glass)" />
      <g filter="url(#soft)" fill="none">
        <path d="M1308 -4 Q1346 14 1378 46" stroke="#b4dafc" strokeWidth="9" />
        <path d="M350 22 Q480 4 580 12 T900 14 T1080 2" stroke="#8ccbee" strokeOpacity=".3" strokeWidth="5" />
        <path d="M700 44 Q770 12 850 -4" stroke="#9ad4f5" strokeOpacity=".45" strokeWidth="5" />
        <path d="M622 -4 L645 44" stroke="#1f7fb5" strokeOpacity=".35" strokeWidth="8" />
        <path d="M100 44 L165 -4" stroke="#7ab0d8" strokeOpacity=".5" strokeWidth="8" />
      </g>
    </svg>
  )
}

function Taskbar() {
  return (
    <footer className="relative flex h-[41px] shrink-0 overflow-hidden border-t border-[#1b3a5c] text-white">
      <Wallpaper />
      <div className="relative flex w-full items-center">
        <div className="absolute inset-x-0 top-0 h-px bg-white/40" />
        <div className="flex w-[54px] justify-center"><StartOrb /></div>
        <div className="flex w-[70px] justify-center"><ExplorerE /></div>
        <div className="flex w-[60px] pl-[10px]"><FolderIcon /></div>
        <div className="flex h-[38px] w-[58px] items-center justify-center rounded-[3px] border border-[#1d4f78] bg-linear-to-b from-[#a7cfe6]/80 to-[#4f98c8]/60 shadow-[inset_0_0_0_1px_rgba(255,255,255,0.55)]">
          <FirefoxIcon />
        </div>
        <div className="ml-[3px] flex h-[38px] w-[51px] items-center justify-center rounded-[3px] border border-[#1d4f78] bg-linear-to-br from-[#f2f9fd]/90 via-[#a9d9ee]/80 to-[#d8eef7]/80 pr-px shadow-[inset_0_0_0_1px_rgba(255,255,255,0.8)]">
          <OutlookIcon />
        </div>
        <div className="h-[38px] w-[3px] rounded-r border-r border-[#1d4f78] bg-white/30" />
        <div className="h-[38px] w-[4px] rounded-r border-r border-[#1d4f78]/70 bg-white/30" />
        <div className="ml-auto flex items-center">
          <svg width="8" height="4"><path d="M0 4 L4 0 L8 4 Z" fill="#fff" /></svg>
          <svg width="16" height="16" viewBox="0 0 16 16" className="ml-[12px]">
            <circle cx="8" cy="8" r="7" fill="#5dd636" stroke="#a8ec8a" strokeWidth=".8" />
            <ellipse cx="8" cy="4.500" rx="4.500" ry="2.500" fill="#a6f285" />
          </svg>
          <svg width="16" height="16" viewBox="0 0 16 16" className="ml-[9px]">
            <path d="M1.500 1 V15" stroke="#fff" strokeWidth="1.500" />
            <path d="M3 2 H8 V4 H15 L13 8 H8 V7 H3 Z" fill="#fff" />
          </svg>
          <svg width="16" height="16" viewBox="0 0 16 16" className="ml-[9px]">
            <path d="M6 3.500 H14.500 V11.500 H4.500 V8 M7 14.500 H13 M9.500 12 V14" fill="none" stroke="#fff" strokeWidth="1.400" />
            <path d="M1 1 V5 H5 V1 M3 5 V14 H6 M3 0 V4" fill="none" stroke="#fff" strokeWidth="1.300" />
          </svg>
          <svg width="16" height="16" viewBox="0 0 16 16" className="ml-[8px]">
            <path d="M1 5.500 H3.500 L7 2 V14 L3.500 10.500 H1 Z" fill="#fff" />
            <path d="M9 6 Q10.500 8 9 10 M11 4.500 Q13.500 8 11 11.500 M13 3 Q16.500 8 13 13" fill="none" stroke="#e4edf7" />
          </svg>
          <div className="ml-[13px] flex w-[66px] flex-col items-center text-[12px] leading-[17px] tracking-[-0.3px]">
            <span>13:29</span>
            <span>18/07/2015</span>
          </div>
          <div className="ml-[8px] h-[38px] w-[14px] border border-[#7d9abd] bg-linear-to-b from-[#5b7da6] to-[#23487b]" />
        </div>
      </div>
    </footer>
  )
}

export default function App() {
  return (
    <main className="flex h-[1080px] w-[1920px] flex-col overflow-hidden bg-[#f1f2f4] font-['Open_Sans',sans-serif]">
      <TitleBar />
      <Ribbon />
      <MessageHeader />
      <div className="bg-[#e8ebf0] px-[6px] pb-[7px]">
        <div className="flex h-[742px] border border-[#a3a9b2] bg-white">
          <MessageBody />
          <ScrollBar />
        </div>
      </div>
      <div className="mx-[6px] h-[5px] shrink-0 border border-[#9fa5ae] bg-linear-to-b from-white to-[#d5d9e0]" />
      <div className="min-h-0 flex-1">
        <PeoplePane />
      </div>
      <Taskbar />
    </main>
  )
}
